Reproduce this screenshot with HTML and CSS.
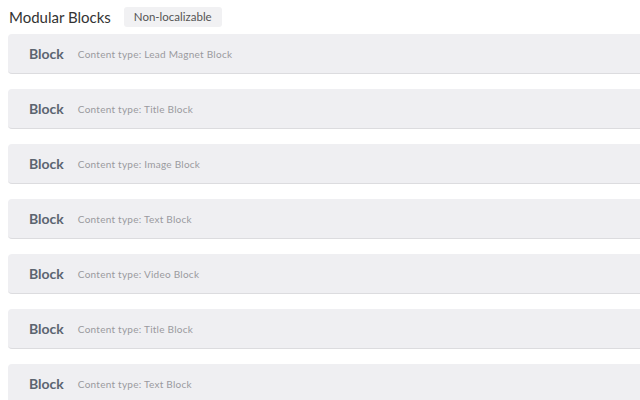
FILE: index.html
```html
<!DOCTYPE html>
<html>
<head>
<meta charset="utf-8">
<link rel="stylesheet" href="styles.css">
</head>
<body>
<div class="page">
  <div class="header">
    <span class="title">Modular Blocks</span>
    <span class="badge">Non-localizable</span>
  </div>
  <div class="list">
    <div class="block"><span class="name">Block</span><span class="type">Content type: Lead Magnet Block</span></div>
    <div class="block"><span class="name">Block</span><span class="type">Content type: Title Block</span></div>
    <div class="block"><span class="name">Block</span><span class="type">Content type: Image Block</span></div>
    <div class="block"><span class="name">Block</span><span class="type">Content type: Text Block</span></div>
    <div class="block"><span class="name">Block</span><span class="type">Content type: Video Block</span></div>
    <div class="block"><span class="name">Block</span><span class="type">Content type: Title Block</span></div>
    <div class="block"><span class="name">Block</span><span class="type">Content type: Text Block</span></div>
  </div>
</div>
</body>
</html>
```
FILE: styles.css
```css
html, body {
  margin: 0;
  padding: 0;
  background: #ffffff;
  overflow: hidden;
}
.page {
  font-family: Lato, "Open Sans", sans-serif;
  padding: 7px 0 0 8px;
  width: 660px;
}
.header {
  display: flex;
  align-items: center;
  height: 20px;
  margin-bottom: 7px;
}
.title {
  font-size: 15px;
  color: #333333;
  margin-left: 1px;
  margin-right: 13px;
}
.badge {
  background: #f1f1f3;
  color: #555555;
  font-size: 11.5px;
  height: 20px;
  line-height: 20px;
  padding: 0 10px;
  border-radius: 3px;
}
.list {
  display: flex;
  flex-direction: column;
  gap: 15px;
}
.block {
  height: 39px;
  background: #efeff2;
  border-bottom: 1px solid #dcdcdf;
  border-radius: 4px 0 0 4px;
  display: flex;
  align-items: center;
  padding-left: 21px;
}
.name {
  font-size: 14px;
  font-weight: 700;
  color: #5b6470;
  margin-right: 14px;
}
.type {
  font-size: 10px;
  letter-spacing: 0.25px;
  color: #9a9a9e;
}
```
